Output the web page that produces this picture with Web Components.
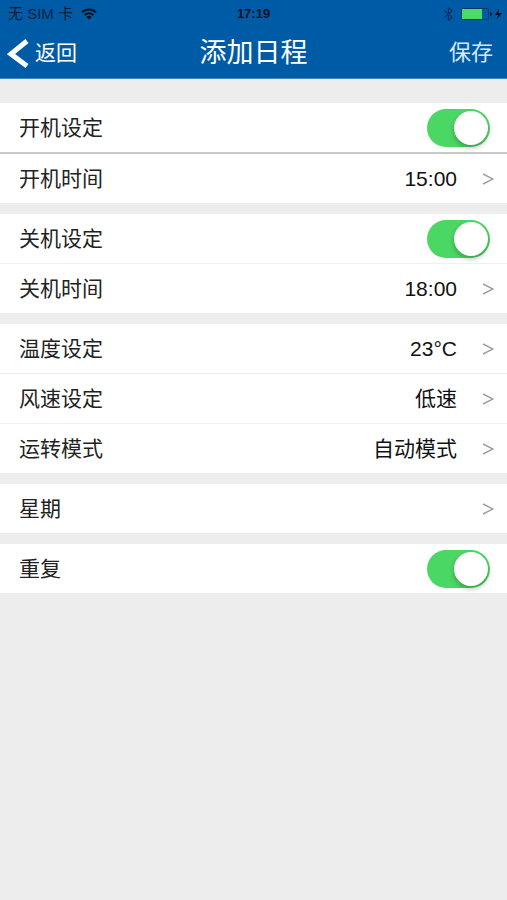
<!DOCTYPE html>
<html lang="zh-CN">
<head>
<meta charset="utf-8">
<meta name="viewport" content="width=device-width, initial-scale=1">
<title>添加日程</title>
<style>
    body {
        margin: 0;
        min-height: 100vh;
        background: #ededed;
        color: #222;
        font-family: "Liberation Sans", "Noto Sans CJK SC", sans-serif;
        font-size: 21px;
        line-height: 28px;
    }
</style>
</head>
<body>
<schedule-page>
    <status-bar slot="header" carrier="无 SIM 卡" time="17:19"></status-bar>
    <nav-bar slot="header">
        <span slot="back">返回</span>
        添加日程
        <span slot="action">保存</span>
    </nav-bar>

    <row-group divider="strong">
        <switch-row checked>开机设定</switch-row>
        <value-row value="15:00">开机时间</value-row>
    </row-group>
    <row-group>
        <switch-row checked>关机设定</switch-row>
        <value-row value="18:00">关机时间</value-row>
    </row-group>
    <row-group>
        <value-row value="23°C">温度设定</value-row>
        <value-row value="低速">风速设定</value-row>
        <value-row value="自动模式">运转模式</value-row>
    </row-group>
    <row-group>
        <value-row>星期</value-row>
    </row-group>
    <row-group>
        <switch-row checked>重复</switch-row>
    </row-group>
</schedule-page>

<script>
class SchedulePage extends HTMLElement {
    constructor() {
        super();
        this._root = this.attachShadow({mode: 'open'});
        this._root.innerHTML = `
        <style>
            :host {
                display: block;
            }
            header {
                background: #005ba6;
                border-bottom: 1px solid #3d86c4;
            }
            main {
                display: flex;
                flex-direction: column;
                gap: 11px;
                padding: 24px 0;
            }
        </style>
        <header><slot name="header"></slot></header>
        <main><slot></slot></main>
        `;
    }
}

class StatusBar extends HTMLElement {
    constructor() {
        super();
        this._root = this.attachShadow({mode: 'open'});
        this._root.innerHTML = `
        <style>
            :host {
                display: grid;
                grid-template-columns: 1fr auto 1fr;
                align-items: center;
                height: 28px;
                color: #04203c;
                font-size: 15px;
                line-height: 20px;
            }
            div {
                display: flex;
                align-items: center;
                gap: 8px;
                padding: 0 5px 0 8px;
            }
            .power {
                justify-content: flex-end;
            }
            .time {
                color: #021222;
                font-weight: bold;
                font-size: 13px;
            }
            svg {
                display: block;
            }
        </style>
        <div>
            <span class="carrier"></span>
            <svg width="16" height="12" viewBox="0 0 16 12" fill="none" stroke="#021222" stroke-width="2">
                <path d="M1 4.4a10 10 0 0 1 14 0"/>
                <path d="M3.6 7.1a6.3 6.3 0 0 1 8.8 0"/>
                <path d="M8 11.6L5.4 9a3.7 3.7 0 0 1 5.2 0z" fill="#021222" stroke="none"/>
            </svg>
        </div>
        <span class="time"></span>
        <div class="power">
            <svg width="9" height="14" viewBox="0 0 9 14" fill="none" stroke="#0a3565" stroke-width="1.2">
                <path d="M0.5 3.5L8 10.3L4.4 13.3V0.700L8 3.7L0.5 10.500"/>
            </svg>
            <svg width="41" height="14" viewBox="0 0 41 14">
                <rect x="0.5" y="1.5" width="27" height="11" rx="1" fill="none" stroke="#08386a"/>
                <rect x="1" y="2" width="20" height="10" fill="#4edb63"/>
                <path d="M29 5q2 0 2 2t-2 2z" fill="#021222"/>
                <path d="M38 2l-4 6h3l-1 4 5-6h-3.4z" fill="#021222"/>
            </svg>
        </div>
        `;
    }

    connectedCallback() {
        this._root.querySelector('.carrier').textContent = this.getAttribute('carrier');
        this._root.querySelector('.time').textContent = this.getAttribute('time');
    }
}

class NavBar extends HTMLElement {
    constructor() {
        super();
        this._root = this.attachShadow({mode: 'open'});
        this._root.innerHTML = `
        <style>
            :host {
                display: grid;
                grid-template-columns: 1fr auto 1fr;
                align-items: center;
                height: 50px;
                color: #fff;
            }
            a {
                display: flex;
                align-items: center;
                gap: 6px;
                padding-left: 7px;
                color: inherit;
                text-decoration: none;
            }
            h1 {
                margin: 0;
                font-size: 27px;
                font-weight: 400;
                line-height: 36px;
            }
            button {
                justify-self: end;
                padding: 0 14px;
                border: 0;
                background: none;
                color: #d6e9fb;
                font: inherit;
                font-size: 22px;
            }
        </style>
        <a href="#">
            <svg width="22" height="30" viewBox="0 0 22 30" fill="none" stroke="#fff" stroke-width="5">
                <path d="M20 3L4 16L20 28"/>
            </svg>
            <slot name="back"></slot>
        </a>
        <h1><slot></slot></h1>
        <button type="button"><slot name="action"></slot></button>
        `;
    }
}

class RowGroup extends HTMLElement {
    constructor() {
        super();
        this._root = this.attachShadow({mode: 'open'});
        this._root.innerHTML = `
        <style>
            :host {
                display: flex;
                flex-direction: column;
                gap: 1px;
                background: #f0f0f0;
            }
            :host([divider="strong"]) {
                gap: 2px;
                background: #c9c9c9;
            }
        </style>
        <slot></slot>
        `;
    }
}

class SwitchRow extends HTMLElement {
    constructor() {
        super();
        this._root = this.attachShadow({mode: 'open'});
        this._root.innerHTML = `
        <style>
            :host {
                display: block;
                background: #fff;
            }
            label {
                display: flex;
                align-items: center;
                justify-content: space-between;
                height: 49px;
                padding: 0 17px 0 19px;
            }
            input {
                appearance: none;
                display: flex;
                box-sizing: border-box;
                width: 63px;
                height: 38px;
                margin: 0;
                padding: 2px;
                border-radius: 19px;
                background: #d8d8d8;
            }
            input::before {
                content: "";
                width: 34px;
                height: 34px;
                border-radius: 50%;
                background: #fff;
                box-shadow: 0 3px 5px rgba(0, 0, 0, 0.25);
            }
            input:checked {
                justify-content: flex-end;
                background: #4bd763;
            }
        </style>
        <label>
            <slot></slot>
            <input type="checkbox" role="switch">
        </label>
        `;
    }

    connectedCallback() {
        this._root.querySelector('input').checked = this.hasAttribute('checked');
    }
}

class ValueRow extends HTMLElement {
    constructor() {
        super();
        this._root = this.attachShadow({mode: 'open'});
        this._root.innerHTML = `
        <style>
            :host {
                display: block;
                background: #fff;
            }
            button {
                display: flex;
                align-items: center;
                width: 100%;
                height: 49px;
                padding: 0 13px 0 19px;
                border: 0;
                background: none;
                color: inherit;
                font: inherit;
                text-align: left;
            }
            .value {
                flex: 1;
                margin-right: 25px;
                color: #111;
                text-align: right;
            }
        </style>
        <button type="button">
            <slot></slot>
            <span class="value"></span>
            <svg width="12" height="12" viewBox="0 0 12 12" fill="none" stroke="#a0a0a0" stroke-width="1.5">
                <path d="M1 1L11 6L1 11"/>
            </svg>
        </button>
        `;
    }

    static get observedAttributes() {
        return ['value'];
    }

    attributeChangedCallback(name, oldValue, newValue) {
        if (name === 'value') {
            this._root.querySelector('.value').textContent = newValue;
        }
    }
}

window.customElements.define('schedule-page', SchedulePage);
window.customElements.define('status-bar', StatusBar);
window.customElements.define('nav-bar', NavBar);
window.customElements.define('row-group', RowGroup);
window.customElements.define('switch-row', SwitchRow);
window.customElements.define('value-row', ValueRow);
</script>
</body>
</html>
